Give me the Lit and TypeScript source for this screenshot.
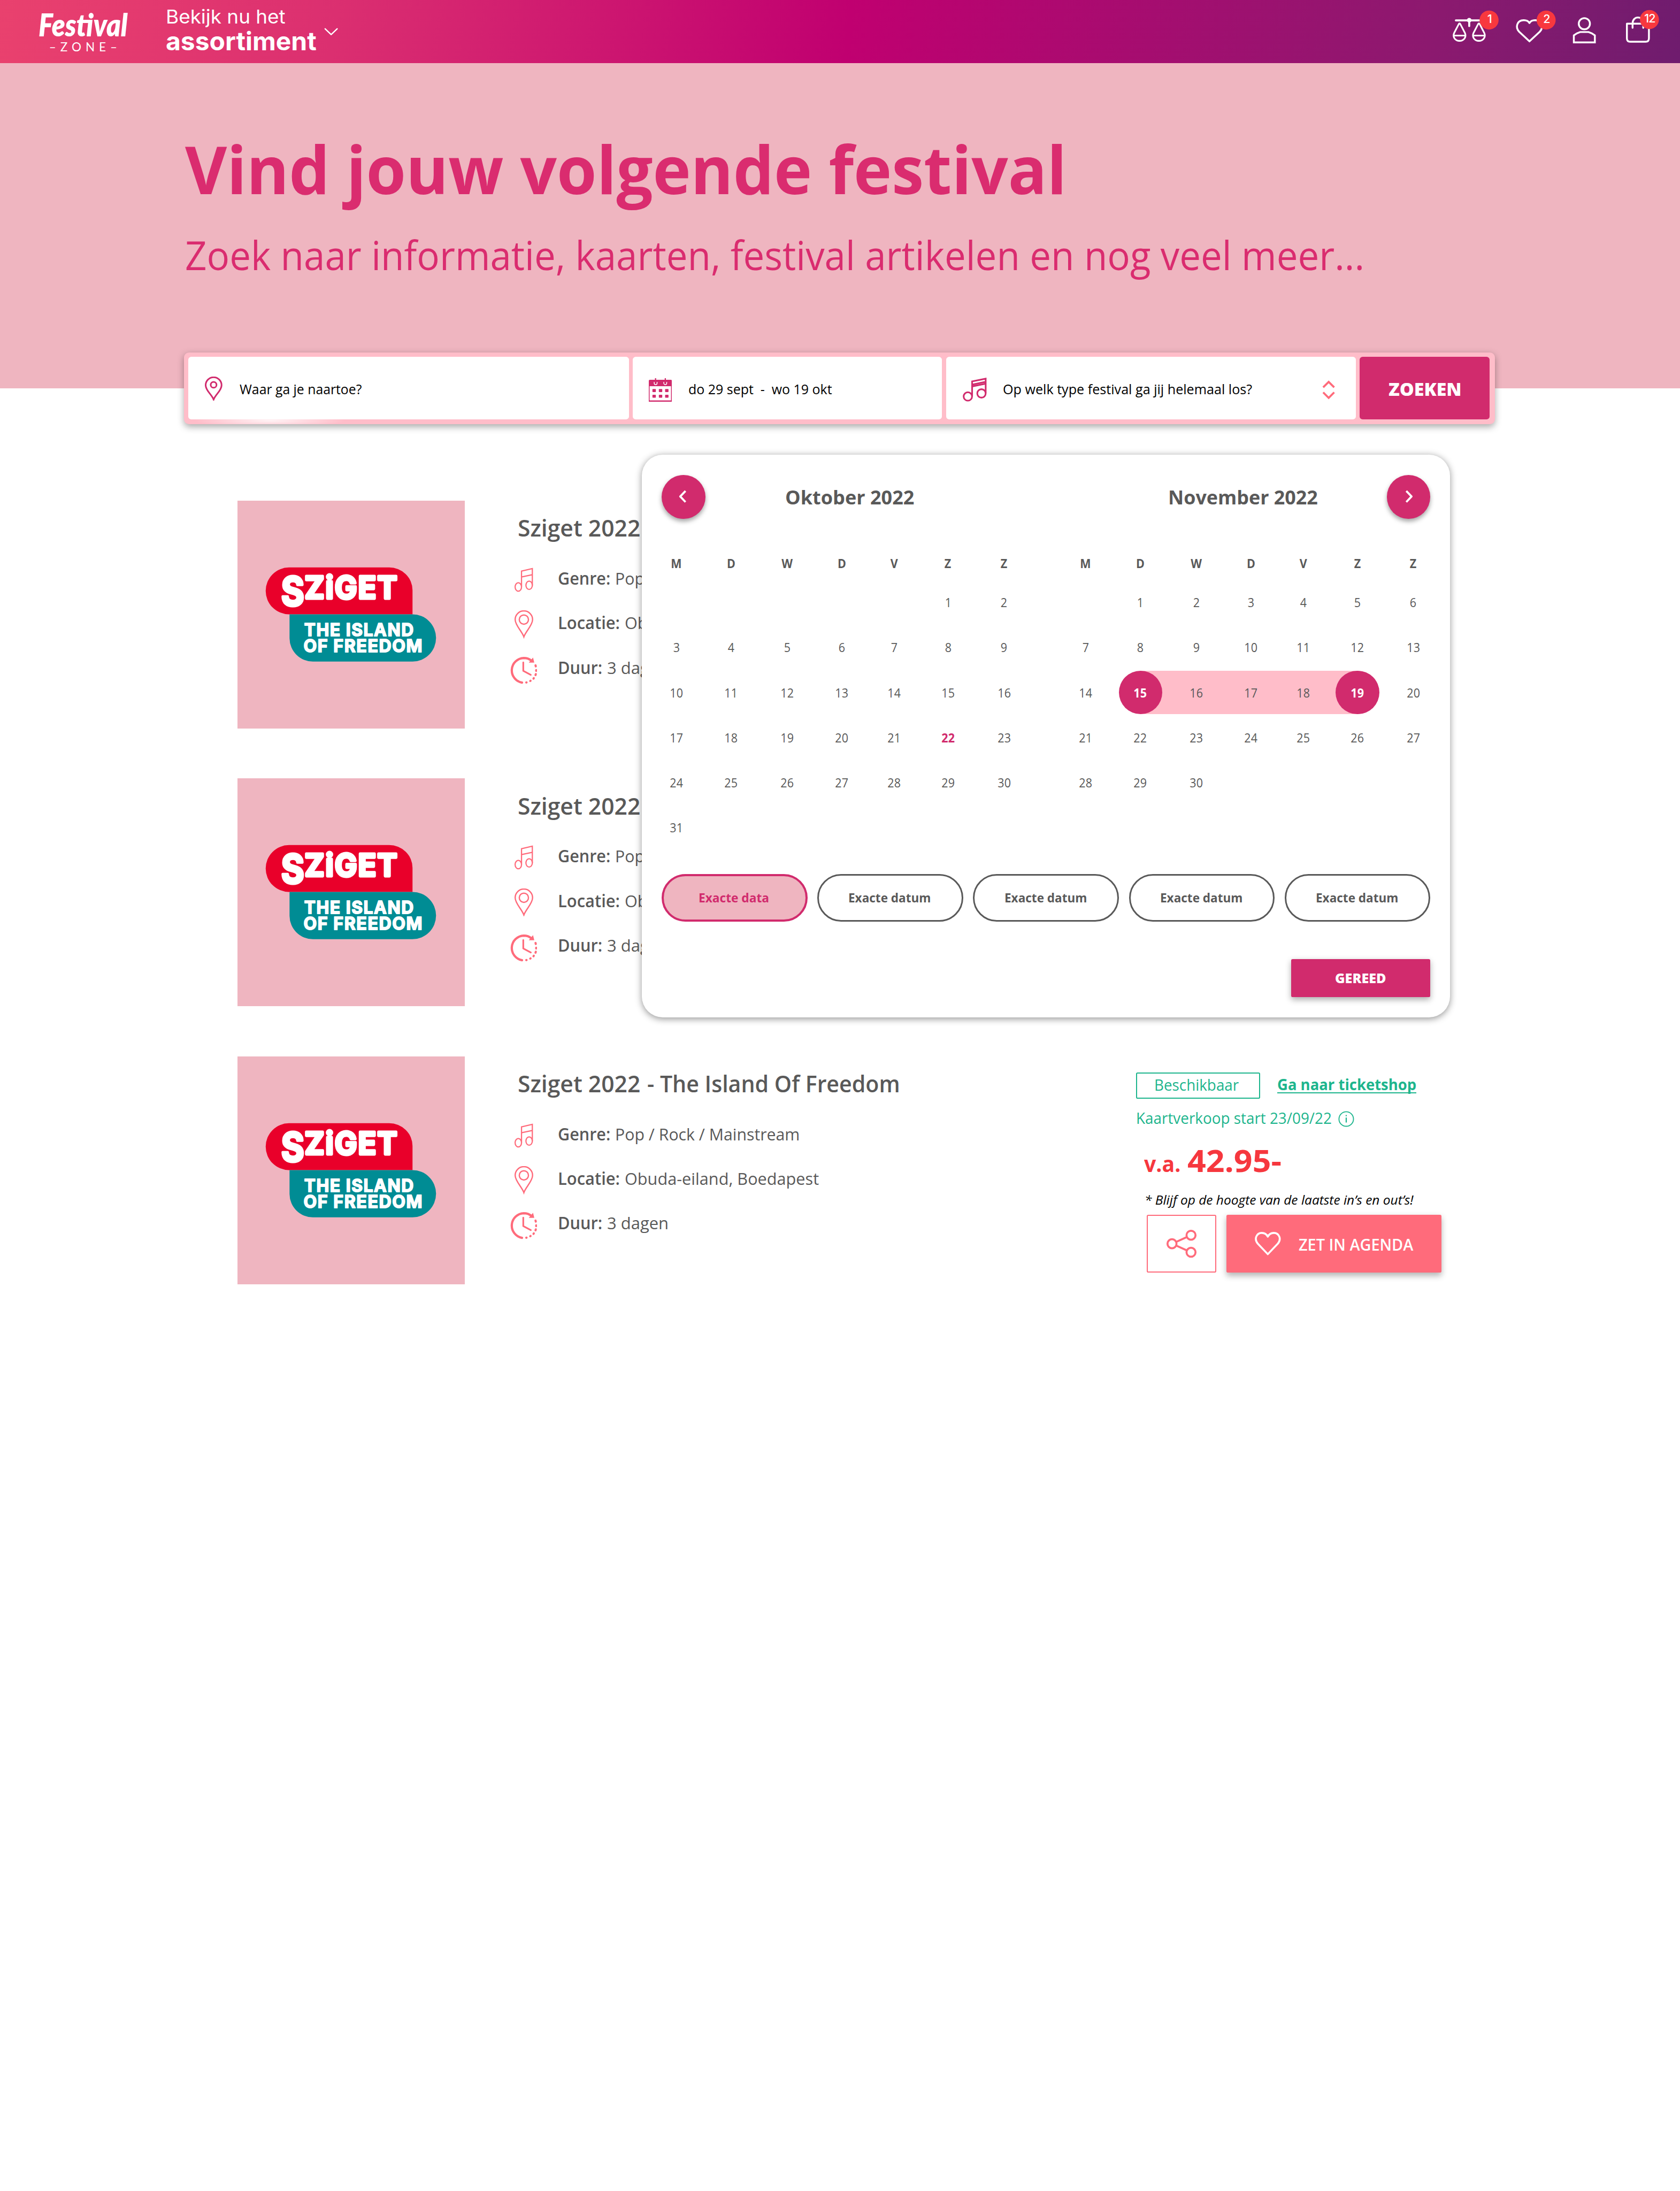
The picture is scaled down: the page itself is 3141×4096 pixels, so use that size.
import { LitElement, html, svg, css, nothing } from "lit";
import { customElement, property, query } from "lit/decorators.js";
import { classMap } from "lit/directives/class-map.js";

/** One line of text whose glyphs are condensed or widened to a set measure. */
@customElement("fit-text")
class FitText extends LitElement {
  @property({ type: Number }) w = 0;
  @query(".box") box!: HTMLElement;
  @query(".ink") ink!: HTMLElement;

  static styles = css`
    :host { display: inline-block; white-space: nowrap; }
    .box { display: block; }
    .ink { display: inline-block; transform-origin: 0 50%; white-space: pre; }
  `;

  updated() {
    this.ink.style.transform = "none";
    const ratio = this.box.getBoundingClientRect().width / this.ink.getBoundingClientRect().width;
    this.ink.style.transform = `scaleX(${ratio})`;
  }

  render() {
    return html`<span class="box" style="width:${this.w}px"><span class="ink"><slot></slot></span></span>`;
  }
}

const notes = svg`
  <path d="M14 38V6.2L35.6 1.2V35M14 18L35.6 13.4"/>
  <ellipse cx="7.6" cy="38" rx="6.4" ry="8.4"/>
  <ellipse cx="29.2" cy="34.6" rx="6.4" ry="8.4"/>`;

const pin = svg`
  <path d="M18.7 53C15 42 1.3 30 1.3 18.5A17.4 17.4 0 0 1 36.1 18.5C36.1 30 22.4 42 18.7 53Z"/>
  <circle cx="18.7" cy="18.5" r="9.2"/>`;

const heartPath = "M26 44.5L6 23.5C-2 14 3.500 2 14 2C20 2 24 5.500 26 9.500C28 5.500 32 2 38 2C48.500 2 54 14 46 23.500Z";

@customElement("site-header")
class SiteHeader extends LitElement {
  static styles = css`
    :host { display: block; }
    .bar {
      height: 126px; display: flex; align-items: flex-start; color: #fff; box-sizing: border-box;
      background: linear-gradient(97deg, #e9416e 0%, #db2f70 20%, #c00070 50.5%, #8c196f 85%, #6f1c6e 100%);
      padding-left: 77px; padding-right: 26px;
    }
    .logo { width: 180px; padding-top: 14px; }
    .name { display: block; font: italic 800 62px/70px Lato, sans-serif; height: 70px; }
    .zone {
      display: flex; justify-content: space-between; width: 136px; margin: -2px 0 0 21px;
      font: 400 24px/24px Lato, sans-serif;
    }
    .menu { margin-left: 74px; display: flex; }
    .light { display: block; height: 44px; font: 400 38px/44px Inter, sans-serif; margin-top: 12px; }
    .strong { display: block; height: 52px; font: 700 51px/52px Inter, sans-serif; margin-top: 1px; }
    .chev { width: 28px; height: 18px; margin: 55px 0 0 15px; }
    .tools { margin-left: auto; width: 516px; height: 126px; margin-right: -26px; }
    .count { font: 500 69px Inter, sans-serif; fill: #fff; text-anchor: middle; letter-spacing: -3px; }
  `;

  badge(cx: number, cy: number, n: string) {
    return svg`<circle cx=${cx} cy=${cy} r="57" fill="#f8383e"/>
      <text class="count" x=${cx + 2} y=${cy + 18}>${n}</text>`;
  }

  render() {
    return html`
      <div class="bar">
        <div class="logo">
          <fit-text class="name" w="178">Festival</fit-text>
          <div class="zone"><span>–</span><span>Z</span><span>O</span><span>N</span><span>E</span><span>–</span></div>
        </div>
        <div class="menu">
          <div>
            <fit-text class="light" w="239">Bekijk nu het</fit-text>
            <fit-text class="strong" w="301">assortiment</fit-text>
          </div>
          <svg class="chev" viewBox="0 0 28 18" fill="none" stroke="#fff" stroke-width="2.6" stroke-linecap="round" stroke-linejoin="round">
            <path d="M2 3L14 14.500L26 3"/>
          </svg>
        </div>
        <svg class="tools" viewBox="0 0 1548 378" fill="none" stroke="#fff" stroke-width="11" stroke-linejoin="round" stroke-linecap="round">
          <path stroke-width="12" d="M205 122H372M285 122V156"/>
          <circle cx="285" cy="121" r="8.500"/>
          ${[227, 343].map((x) => svg`<path stroke-width="10" d="M${x - 4} 143L${x - 32} 197C${x - 44} 224 ${x - 24} 245 ${x} 245C${x + 24} 245 ${x + 44} 224 ${x + 32} 197L${x + 4} 143Q${x} 138 ${x - 4} 143ZM${x - 35} 213H${x + 35}"/>`)}
          <path d="M646 248L584 190C560 164 570 121 612 121C628 121 641 129 646 138C651 129 664 121 680 121C722 121 732 164 708 190Z"/>
          <circle cx="975" cy="142" r="33.500"/>
          <path stroke-linejoin="miter" d="M912 254V212Q930 198 950 192H1000Q1020 198 1038 212V254Z"/>
          <path d="M1230 142H1362V230Q1362 250 1342 250H1250Q1230 250 1230 230Z"/>
          <path d="M1264 167V142C1264 92 1328 92 1328 142V167"/>
          <g stroke="none">
            ${this.badge(404, 120, "1")}${this.badge(746, 120, "2")}${this.badge(1365, 117, "12")}
          </g>
        </svg>
      </div>`;
  }
}

@customElement("search-bar")
class SearchBar extends LitElement {
  static styles = css`
    :host { display: block; }
    .bar {
      display: grid; grid-template-columns: 880px 618px 818px 260px; column-gap: 8px;
      width: 2618px; height: 143px; box-sizing: border-box; padding: 9px 8px;
      background: radial-gradient(ellipse 150px 14px at 172px 136px, #fff3f5, #ffbdc9) #ffbdc9;
      border-radius: 10px; box-shadow: 0 5px 14px rgba(0, 0, 0, 0.34);
      font: 400 28px/40px "Open Sans", sans-serif; color: #000;
    }
    .field { background: #fff; border-radius: 6px; display: flex; align-items: center; padding: 0 41px 0 33px; gap: 35px; }
    .pin { width: 35px; height: 48px; margin-top: 1px; }
    .cal { width: 46px; height: 47px; margin-top: 6px; margin-left: -1px; }
    .music { width: 48px; height: 48px; margin-top: 6px; }
    .sort { width: 26px; height: 38px; margin-left: auto; margin-top: 7px; }
    .go {
      display: flex; align-items: center; justify-content: center; background: #d12b6d; color: #fff;
      border-radius: 6px; font-size: 36px; font-weight: 800; padding-left: 2px;
    }
    fit-text { height: 40px; margin-top: 5px; }
    .cal + fit-text { margin-left: -2px; }
    .music + fit-text { margin-left: -3px; }
  `;

  render() {
    const dots = [10.7, 23.5, 36].flatMap((x) => [24.7, 36].map((y) => ({ x, y })));
    return html`
      <div class="bar">
        <div class="field">
          <svg class="pin" viewBox="0 0 35 48" fill="none" stroke="#d12b6d" stroke-width="3.2">
            <path d="M17.500 46C14 36 1.600 28 1.600 17.300A15.900 15.900 0 0 1 33.400 17.300C33.400 28 21 36 17.500 46Z"/>
            <circle cx="17.500" cy="16.500" r="5.800"/>
          </svg>
          <fit-text w="244">Waar ga je naartoe?</fit-text>
        </div>
        <div class="field">
          <svg class="cal" viewBox="0 0 46 47" fill="none">
            <path fill="#d12b6d" d="M0 5Q0 3.300 2 3.300H44Q46 3.300 46 5V16H0Z"/>
            <path stroke="#d12b6d" stroke-width="1.600" d="M0.800 15V45.500H45.200V15"/>
            <path stroke="#d12b6d" stroke-width="2.400" d="M0 45.800H46M13.500 0V5M33 0V5"/>
            <path stroke="#fff" stroke-width="1.600" d="M10.800 7.500V10A2.900 3 0 0 0 16.600 10V7.500M30 7.500V10A2.900 3 0 0 0 35.800 10V7.500"/>
            ${dots.map((d) => svg`<rect x=${d.x - 3.4} y=${d.y - 3} width="6.800" height="6" rx="1" fill="#d12b6d"/>`)}
          </svg>
          <fit-text w="287">do 29 sept  -  wo 19 okt</fit-text>
        </div>
        <div class="field">
          <svg class="music" viewBox="0 0 48 48" fill="none" stroke="#d12b6d" stroke-width="3.300">
            <path d="M18.700 37V7.500L45.800 2V31M18.700 13.800L45.800 8.200M18.700 17.500L45.800 12"/>
            <circle cx="10.200" cy="37.600" r="8.400"/>
            <circle cx="37.400" cy="31.500" r="8.400"/>
          </svg>
          <fit-text w="498">Op welk type festival ga jij helemaal los?</fit-text>
          <svg class="sort" viewBox="0 0 26 38" fill="none" stroke="#ff6b7b" stroke-width="4">
            <path d="M2 14L13 3L24 14M2 24L13 35L24 24"/>
          </svg>
        </div>
        <div class="go"><fit-text w="146">ZOEKEN</fit-text></div>
      </div>`;
  }
}

@customElement("festival-card")
class FestivalCard extends LitElement {
  @property({ type: Boolean }) offer = false;

  static styles = css`
    :host { display: block; }
    .card { display: flex; height: 455px; font: 400 34px/46px "Open Sans", sans-serif; color: #595959; }
    .cover { width: 455px; height: 455px; background: #efb5c0; flex: none; }
    .brand { font-family: Inter, sans-serif; font-weight: 700; fill: #fff; stroke: #fff; stroke-linejoin: round; }
    .word { letter-spacing: 7px; }
    .claim { letter-spacing: 5px; }
    .info { margin-left: 90px; width: 1250px; padding-top: 25px; box-sizing: border-box; flex: none; }
    .title { display: flex; gap: 14px; font-size: 46px; line-height: 60px; height: 60px; font-weight: 600; margin: 0 0 25px 15px; }
    .row { display: flex; align-items: center; height: 89px; }
    .icon { width: 54px; height: 56px; margin-right: 41px; flex: none; }
    .notes, .pin { margin-top: 8px; }
    .clock { margin-top: 12px; }
    .label { font-weight: 600; margin-right: 10px; height: 46px; }
    .value { height: 46px; }
    .side { padding-top: 32px; color: #1db58d; flex: none; }
    .line { display: flex; align-items: center; }
    .state {
      width: 248px; height: 53px; box-sizing: border-box; border: 3px solid #1db58d; border-radius: 3px;
      display: flex; justify-content: center; align-items: center; font-size: 31px; line-height: 40px; padding: 0 5px 3px 0;
    }
    .shop {
      margin: -2px 0 0 34px; font-size: 30px; line-height: 30px; font-weight: 700; height: 33px;
      border-bottom: 2.500px solid #1db58d; box-sizing: border-box;
    }
    .sale { margin-top: 18px; height: 40px; font-size: 31px; line-height: 40px; gap: 13px; }
    .hint { width: 32px; height: 32px; margin-top: 4px; }
    .price { margin: 30px 0 0 16px; height: 70px; display: flex; align-items: baseline; gap: 14px; color: #f6373e; font-weight: 700; line-height: 70px; }
    .from { font-size: 44px; }
    .amount { font-size: 61px; }
    .note { display: block; margin: 29px 0 0 18px; height: 30px; font-size: 26px; line-height: 30px; font-style: italic; color: #000; }
    .actions { display: flex; gap: 20px; margin: 15px 0 0 22px; }
    .share { width: 139px; height: 115px; box-sizing: border-box; border: 3px solid #ff6b7b; border-radius: 3px; display: flex; align-items: center; justify-content: center; }
    .share svg { width: 62px; height: 58px; }
    .plan {
      width: 430px; height: 115px; box-sizing: border-box; padding-left: 57px; background: #ff6b7b; border-radius: 3px; color: #fff;
      display: flex; align-items: center; gap: 35px; font-size: 32px; font-weight: 600; box-shadow: 0 6px 12px rgba(0, 0, 0, 0.3);
    }
    .plan svg { width: 52px; height: 48px; }
    .plan fit-text { height: 44px; }
  `;

  side() {
    return html`
      <div class="side">
        <div class="line">
          <div class="state"><fit-text w="169">Beschikbaar</fit-text></div>
          <fit-text class="shop" w="278">Ga naar ticketshop</fit-text>
        </div>
        <div class="line sale">
          <fit-text w="391">Kaartverkoop start 23/09/22</fit-text>
          <svg class="hint" viewBox="0 0 32 32" fill="none" stroke="#1db58d" stroke-width="2">
            <circle cx="16" cy="16" r="14.500"/><path stroke-width="2.400" d="M16 13V23M16 8V10.500"/>
          </svg>
        </div>
        <div class="price"><fit-text class="from" w="73">v.a.</fit-text><fit-text class="amount" w="188">42.95-</fit-text></div>
        <fit-text class="note" w="537">* Blijf op de hoogte van de laatste in’s en out’s!</fit-text>
        <div class="actions">
          <div class="share">
            <svg viewBox="0 0 62 58" fill="none" stroke="#ff6b7b" stroke-width="4">
              <circle cx="12" cy="29" r="9"/><circle cx="50" cy="12" r="9"/><circle cx="50" cy="46" r="9"/>
              <path d="M20 25.500L42 15.500M20 32.500L42 42.500"/>
            </svg>
          </div>
          <div class="plan">
            <svg viewBox="0 0 52 48" fill="none" stroke="#fff" stroke-width="3.800" stroke-linejoin="round"><path d=${heartPath}/></svg>
            <fit-text w="229">ZET IN AGENDA</fit-text>
          </div>
        </div>
      </div>`;
  }

  render() {
    return html`
      <div class="card">
        <svg class="cover" viewBox="42 60 1365 1365">
          <path fill="#e9002a" d="M351 460H951A140 136 0 0 1 1091 596V741H351A140 140.500 0 0 1 351 460Z"/>
          <path fill="#008c94" d="M354 741H1091A141 141.500 0 0 1 1091 1024H494A140 140 0 0 1 354 884Z"/>
          <text class="brand" x="304" y="688" font-size="238" stroke-width="16" textLength="138" lengthAdjust="spacingAndGlyphs">S</text>
          <text class="brand word" x="444" y="647" font-size="186" stroke-width="16" textLength="562" lengthAdjust="spacingAndGlyphs">ZiGET</text>
          <text class="brand claim" x="442" y="870" font-size="106" stroke-width="6" textLength="660" lengthAdjust="spacingAndGlyphs">THE ISLAND</text>
          <text class="brand claim" x="438" y="967" font-size="106" stroke-width="6" textLength="716" lengthAdjust="spacingAndGlyphs">OF FREEDOM</text>
        </svg>
        <div class="info">
          <div class="title"><fit-text w="245">Sziget 2022</fit-text><fit-text w="505">- The Island Of Freedom</fit-text></div>
          <div class="row">
            <svg class="icon notes" viewBox="-8.500 -4 54 56" fill="none" stroke="#ff6b7b" stroke-width="2.400">${notes}</svg>
            <fit-text class="label" w="105">Genre:</fit-text><fit-text class="value" w="369">Pop / Rock / Mainstream</fit-text>
          </div>
          <div class="row">
            <svg class="icon pin" viewBox="-8.500 0 54 56" fill="none" stroke="#ff6b7b" stroke-width="2.600">${pin}</svg>
            <fit-text class="label" w="124">Locatie:</fit-text><fit-text class="value" w="388">Obuda-eiland, Boedapest</fit-text>
          </div>
          <div class="row">
            <svg class="icon clock" viewBox="0 -1 54 56" fill="none" stroke="#ff6b7b" stroke-linecap="round">
              <path stroke-width="4.500" d="M23.500 51.500A24.800 24.800 0 0 1 27 2.300Q36 2.300 42 7.500"/>
              <path stroke="none" fill="#ff6b7b" d="M45.500 1.500L48 11.500L37 11.500Z"/>
              <path stroke-width="3.400" stroke-linejoin="round" d="M26 11V28L41 36"/>
              <path stroke-width="4.200" d="M50.500 17L51 19M51.800 26.500V28M51 34.500L50.500 36.500M47 42.500L46.500 43.500M40.500 47.800L40 48.200M32.500 51L32 51.200"/>
            </svg>
            <fit-text class="label" w="89">Duur:</fit-text><fit-text class="value" w="123">3 dagen</fit-text>
          </div>
        </div>
        ${this.offer ? this.side() : nothing}
      </div>`;
  }
}

interface Month { offset: number; days: number; today?: number; range?: [number, number]; }

@customElement("date-picker")
class DatePicker extends LitElement {
  static styles = css`
    :host { display: block; }
    .panel {
      width: 1615px; height: 1124px; box-sizing: border-box; padding: 41px 40px 40px; background: #fff; border-radius: 42px;
      box-shadow: 0 3px 14px rgba(0, 0, 0, 0.42); color: #595959; font: 400 25.500px/36px "Open Sans", sans-serif;
      display: flex; flex-direction: column;
    }
    .head { display: flex; align-items: center; height: 87px; font-size: 38px; font-weight: 700; line-height: 50px; }
    .head fit-text { height: 50px; margin-top: 1px; }
    .nav { width: 87px; height: 87px; border-radius: 50%; background: #d12b6d; display: flex; align-items: center; justify-content: center; box-shadow: 0 5px 9px rgba(0, 0, 0, 0.36); }
    .nav svg { width: 16px; height: 26px; margin: 0 3px 2px 0; }
    .nav.next svg { margin-right: 0; }
    .first { margin-left: 159px; }
    .second { margin-left: 508px; }
    .next { margin-left: auto; }
    .months { display: flex; justify-content: space-between; margin: 56px -22px 0 -25px; }
    .grid {
      display: grid; grid-template-columns: 108px 111px 112.600px 105.800px 103.200px 112.200px 111.800px;
      grid-template-rows: 66px repeat(6, 90px);
    }
    .cell { display: flex; align-items: center; justify-content: center; position: relative; }
    .cell span { transform: scaleX(0.9); position: relative; }
    .day { font-weight: 700; }
    .today { font-weight: 700; color: #d12b6d; }
    .in::before { content: ""; position: absolute; inset: 1.500px 0; background: #ffbdc9; }
    .start::before { left: 50%; }
    .end::before { right: 50%; }
    .edge::after { content: ""; position: absolute; width: 87px; height: 87px; border-radius: 50%; background: #d12b6d; left: calc(50% - 43px); top: 1.500px; }
    .edge { color: #fff; font-weight: 700; }
    .edge span { z-index: 1; }
    .pills { display: flex; justify-content: space-between; margin-top: 48px; }
    .pill { width: 291px; height: 95px; box-sizing: border-box; border: 4px solid #595959; border-radius: 48px; display: flex; align-items: center; justify-content: center; font-weight: 700; padding: 0 2px 1px 0; }
    .on { border: 5px solid #d12b6d; background: #efb5c0; color: #d12b6d; padding-right: 4px; }
    .done { width: 278px; height: 76px; margin: 75px 0 0 auto; background: #d12b6d; color: #fff; border-radius: 3px; display: flex; align-items: center; justify-content: center; font-size: 27px; font-weight: 800; box-shadow: 0 5px 12px rgba(0, 0, 0, 0.32); }
    .pill fit-text, .done fit-text { height: 36px; }
    .done fit-text { margin-top: 1px; }
  `;

  month(m: Month) {
    const cells = [
      ...Array.from({ length: m.offset }, () => 0),
      ...Array.from({ length: m.days }, (_, i) => i + 1),
    ];
    const [a, b] = m.range ?? [0, -1];
    return html`<div class="grid">
      ${["M", "D", "W", "D", "V", "Z", "Z"].map((d) => html`<div class="cell day"><span>${d}</span></div>`)}
      ${cells.map((d) => html`<div class=${classMap({
        cell: true,
        today: d === m.today,
        in: d >= a && d <= b && d > 0,
        start: d > 0 && d === a,
        end: d === b,
        edge: d > 0 && (d === a || d === b),
      })}>${d ? html`<span>${d}</span>` : nothing}</div>`)}
    </div>`;
  }

  render() {
    const arrow = (d: string) => html`<svg viewBox="0 0 16 26" fill="none" stroke="#fff" stroke-width="4" stroke-linejoin="round"><path d=${d}/></svg>`;
    return html`
      <div class="panel">
        <div class="head">
          <div class="nav">${arrow("M13.500 2L3 13L13.500 24")}</div>
          <fit-text class="first" w="258">Oktober 2022</fit-text>
          <fit-text class="second" w="299">November 2022</fit-text>
          <div class="nav next">${arrow("M3.500 2L14 13L3.500 24")}</div>
        </div>
        <div class="months">
          ${this.month({ offset: 5, days: 31, today: 22 })}
          ${this.month({ offset: 1, days: 30, range: [15, 19] })}
        </div>
        <div class="pills">
          <div class="pill on"><fit-text w="141">Exacte data</fit-text></div>
          ${[1, 2, 3, 4].map(() => html`<div class="pill"><fit-text w="165">Exacte datum</fit-text></div>`)}
        </div>
        <div class="done"><fit-text w="102">GEREED</fit-text></div>
      </div>`;
  }
}

@customElement("app-root")
class AppRoot extends LitElement {
  static styles = css`
    :host { display: block; background: #fff; }
    .page { width: 3356px; height: 4376px; overflow: hidden; position: relative; zoom: 0.93594; background: #fff; }
    .hero { height: 650px; box-sizing: border-box; background: #efb5c0; padding: 130px 0 0 369px; color: #da2c6f; font-family: "Open Sans", sans-serif; }
    .title { display: block; font-size: 133px; line-height: 160px; height: 160px; font-weight: 700; margin-left: 1px; }
    .lead { display: block; font-size: 81px; line-height: 100px; height: 100px; margin: 42px 0 0 1px; }
    .search { margin: -72px 0 0 368px; }
    .list { display: flex; flex-direction: column; gap: 100px; padding: 153px 0 0 474px; }
    .popup { position: absolute; left: 1282px; top: 908px; }
  `;

  render() {
    return html`
      <div class="page">
        <site-header></site-header>
        <div class="hero">
          <fit-text class="title" w="1761">Vind jouw volgende festival</fit-text>
          <fit-text class="lead" w="2356">Zoek naar informatie, kaarten, festival artikelen en nog veel meer...</fit-text>
        </div>
        <search-bar class="search"></search-bar>
        <div class="list">
          ${[false, false, true].map((offer) => html`<festival-card ?offer=${offer}></festival-card>`)}
        </div>
        <date-picker class="popup"></date-picker>
      </div>`;
  }
}
